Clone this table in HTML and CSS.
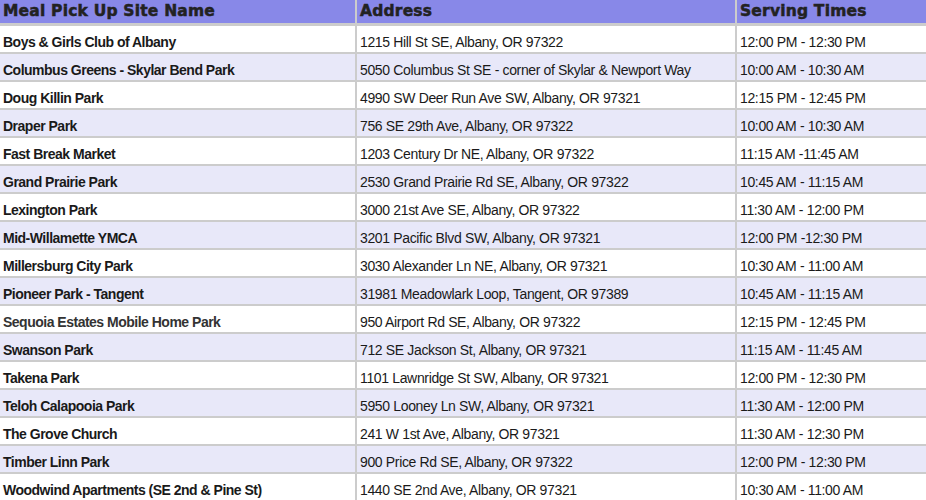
FILE: index.html
```html
<!DOCTYPE html>
<html>
<head>
<meta charset="utf-8">
<link rel="stylesheet" href="styles.css">
</head>
<body>
<table class="sites">
  <colgroup>
    <col class="c-name">
    <col class="c-addr">
    <col class="c-time">
  </colgroup>
  <thead>
    <tr><th>Meal Pick Up Site Name</th><th>Address</th><th>Serving Times</th></tr>
  </thead>
  <tbody>
    <tr><td class="name">Boys &amp; Girls Club of Albany</td><td>1215 Hill St SE, Albany, OR 97322</td><td>12:00 PM - 12:30 PM</td></tr>
    <tr><td class="name">Columbus Greens - Skylar Bend Park</td><td>5050 Columbus St SE - corner of Skylar &amp; Newport Way</td><td>10:00 AM - 10:30 AM</td></tr>
    <tr><td class="name">Doug Killin Park</td><td>4990 SW Deer Run Ave SW, Albany, OR 97321</td><td>12:15 PM - 12:45 PM</td></tr>
    <tr><td class="name">Draper Park</td><td>756 SE 29th Ave, Albany, OR 97322</td><td>10:00 AM - 10:30 AM</td></tr>
    <tr><td class="name">Fast Break Market</td><td>1203 Century Dr NE, Albany, OR 97322</td><td>11:15 AM -11:45 AM</td></tr>
    <tr><td class="name">Grand Prairie Park</td><td>2530 Grand Prairie Rd SE, Albany, OR 97322</td><td>10:45 AM - 11:15 AM</td></tr>
    <tr><td class="name">Lexington Park</td><td>3000 21st Ave SE, Albany, OR 97322</td><td>11:30 AM - 12:00 PM</td></tr>
    <tr><td class="name">Mid-Willamette YMCA</td><td>3201 Pacific Blvd SW, Albany, OR 97321</td><td>12:00 PM -12:30 PM</td></tr>
    <tr><td class="name">Millersburg City Park</td><td>3030 Alexander Ln NE, Albany, OR 97321</td><td>10:30 AM - 11:00 AM</td></tr>
    <tr><td class="name">Pioneer Park - Tangent</td><td>31981 Meadowlark Loop, Tangent, OR 97389</td><td>10:45 AM - 11:15 AM</td></tr>
    <tr><td class="name light">Sequoia Estates Mobile Home Park</td><td>950 Airport Rd SE, Albany, OR 97322</td><td>12:15 PM - 12:45 PM</td></tr>
    <tr><td class="name">Swanson Park</td><td>712 SE Jackson St, Albany, OR 97321</td><td>11:15 AM - 11:45 AM</td></tr>
    <tr><td class="name">Takena Park</td><td>1101 Lawnridge St SW, Albany, OR 97321</td><td>12:00 PM - 12:30 PM</td></tr>
    <tr><td class="name">Teloh Calapooia Park</td><td>5950 Looney Ln SW, Albany, OR 97321</td><td>11:30 AM - 12:00 PM</td></tr>
    <tr><td class="name">The Grove Church</td><td>241 W 1st Ave, Albany, OR 97321</td><td>11:30 AM - 12:30 PM</td></tr>
    <tr><td class="name">Timber Linn Park</td><td>900 Price Rd SE, Albany, OR 97322</td><td>12:00 PM - 12:30 PM</td></tr>
    <tr><td class="name">Woodwind Apartments (SE 2nd &amp; Pine St)</td><td>1440 SE 2nd Ave, Albany, OR 97321</td><td>10:30 AM - 11:00 AM</td></tr>
  </tbody>
</table>
</body>
</html>
```
FILE: styles.css
```css
html, body {
  margin: 0;
  padding: 0;
  background: #ffffff;
}

.sites {
  width: 926px;
  border-collapse: collapse;
  table-layout: fixed;
  font-family: "Liberation Sans", Arial, sans-serif;
  color: #1a1a1a;
}

.c-name { width: 356px; }
.c-addr { width: 380px; }
.c-time { width: 190px; }

.sites th {
  height: 22px;
  padding: 0 0 1px 3px;
  background: #8888e8;
  text-align: left;
  font-family: "DejaVu Sans", sans-serif;
  font-weight: bold;
  font-size: 15.5px;
  letter-spacing: 0.2px;
  -webkit-text-stroke: 0.5px #222222;
  color: #222222;
  border-bottom: 3px solid #cccccc;
  border-left: 2px solid #cccccc;
  vertical-align: middle;
}

.sites th:first-child { border-left: none; }
.sites th:last-child { border-right: 1px solid #d8d8d8; }

.sites td {
  height: 24px;
  padding: 0 0 2px 3px;
  font-size: 14px;
  letter-spacing: -0.35px;
  vertical-align: bottom;
  border-bottom: 2px solid #cccccc;
  border-left: 2px solid #cccccc;
  white-space: nowrap;
  overflow: hidden;
}

.sites td:first-child { border-left: none; }
.sites td:last-child { border-right: 1px solid #d8d8d8; }

.sites tbody tr:nth-child(even) td { background: #e8e8f9; }

.sites td.name {
  font-weight: bold;
  letter-spacing: -0.5px;
}

.sites td.light { color: #333333; }
```
